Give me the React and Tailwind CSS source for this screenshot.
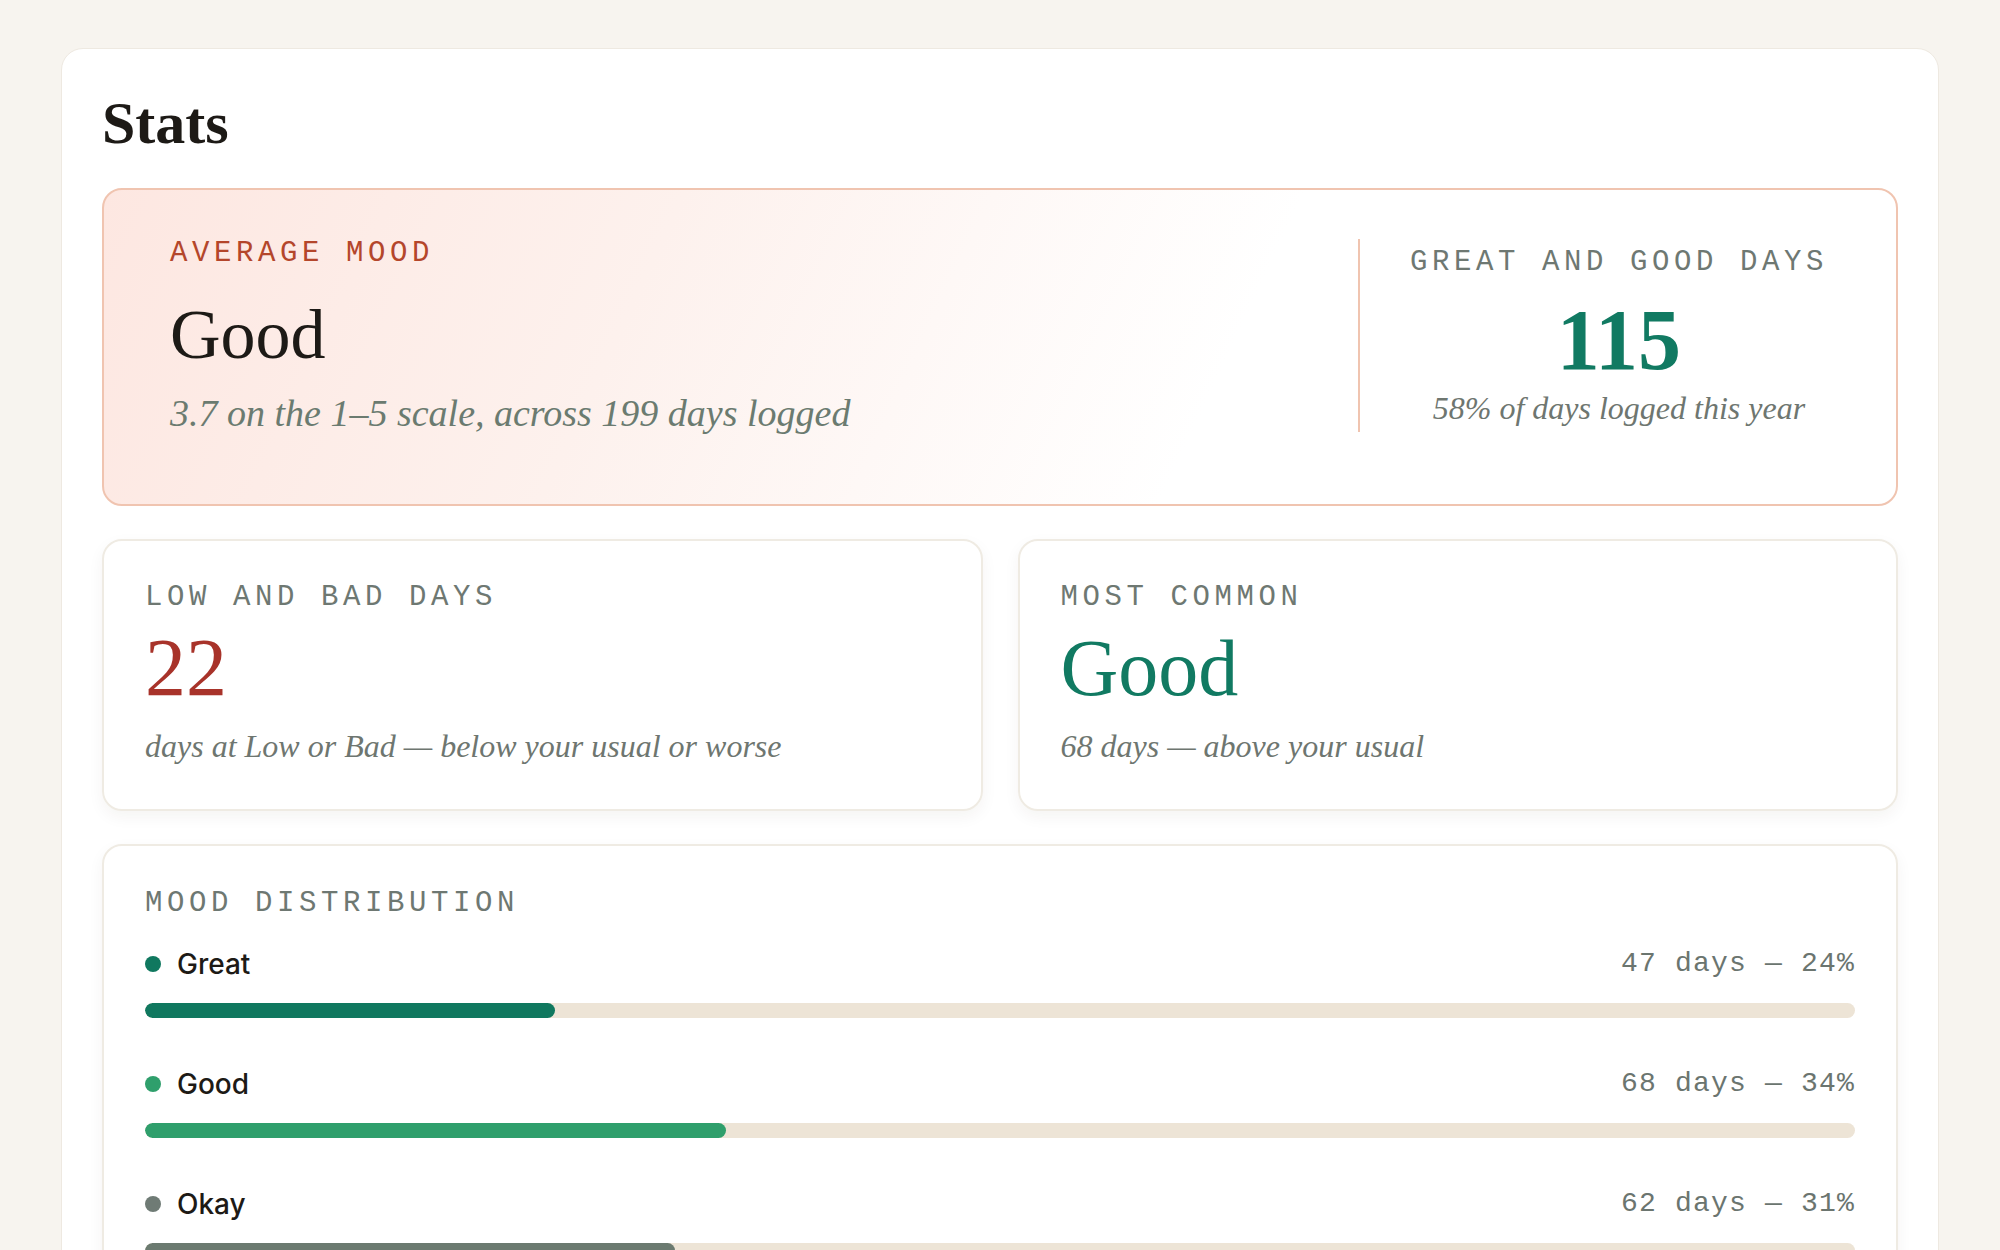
import React from 'react';

const serif = "font-['Liberation_Serif','DejaVu_Serif',serif]";
const mono = "font-['Liberation_Mono','DejaVu_Sans_Mono',monospace]";
const sans = "font-['Inter','Lato',sans-serif]";

const moods = [
  { name: 'Great', days: 47, pct: 24, dot: 'bg-[#10785f]', fill: 'bg-[#10785f]' },
  { name: 'Good', days: 68, pct: 34, dot: 'bg-[#2f9f6c]', fill: 'bg-[#2f9f6c]' },
  { name: 'Okay', days: 62, pct: 31, dot: 'bg-[#6f7b75]', fill: 'bg-[#6b7a70]' },
  { name: 'Low', days: 17, pct: 9, dot: 'bg-[#c98a4b]', fill: 'bg-[#c98a4b]' },
  { name: 'Bad', days: 5, pct: 3, dot: 'bg-[#a8332a]', fill: 'bg-[#a8332a]' },
];

const Label = ({ children, className = 'text-[#6e7872]' }) => (
  <div className={`${mono} text-[29px] leading-none tracking-[4.6px] uppercase ${className}`}>{children}</div>
);

const Note = ({ children, className = '' }) => (
  <div className={`${serif} italic leading-none ${className}`}>{children}</div>
);

const App = () => {
  return (
    <div className="min-h-screen bg-[#f7f4ef] px-[61px] pt-[48px]">
      <div className="bg-white border border-[#eee9e1] rounded-[22px] px-[40px] pt-[44px] pb-[40px] flex flex-col gap-[33px]">
        {/* Header */}
        <h1 className={`${serif} font-bold text-[60px] leading-none text-[#1d1a16] mb-[2px]`}>Stats</h1>

        {/* Average mood */}
        <div className="flex rounded-[20px] border-2 border-[#f0c4b0] bg-[linear-gradient(115deg,#fde7e1_0%,#fdf1ed_30%,#ffffff_62%)] pl-[66px] pr-[68px] pt-[49px] pb-[72px]">
          <div className="flex-1 flex flex-col">
            <Label className="text-[#b4462b]">Average mood</Label>
            <div className={`${serif} mt-[32px] text-[70px] leading-none text-[#1d1a16]`}>Good</div>
            <Note className="mt-[24px] text-[38px] text-[#6b7b70]">3.7 on the 1–5 scale, across 199 days logged</Note>
          </div>
          <div className="border-l-2 border-[#f0c4b0] pl-[50px] flex flex-col items-center justify-center">
            <Label>Great and good days</Label>
            <div className={`${serif} font-bold mt-[20px] text-[86px] leading-none text-[#117a62]`}>115</div>
            <Note className="mt-[9px] text-[32px] text-[#6e7670]">58% of days logged this year</Note>
          </div>
        </div>

        {/* Low/bad + most common */}
        <div className="grid grid-cols-2 gap-[35px]">
          <div className="rounded-[20px] border-2 border-[#efebe3] shadow-[0_6px_16px_rgba(60,40,20,0.05)] px-[41px] pt-[42px] pb-[47px]">
            <Label>Low and bad days</Label>
            <div className={`${serif} mt-[15px] text-[82px] leading-none text-[#a8332a]`}>22</div>
            <Note className="mt-[21px] text-[32px] text-[#6e7670]">days at Low or Bad — below your usual or worse</Note>
          </div>
          <div className="rounded-[20px] border-2 border-[#efebe3] shadow-[0_6px_16px_rgba(60,40,20,0.05)] px-[41px] pt-[42px] pb-[47px]">
            <Label>Most common</Label>
            <div className={`${serif} mt-[15px] text-[82px] leading-none text-[#117a62]`}>
              <span className="text-[80px]">Good</span>
            </div>
            <Note className="mt-[21px] text-[32px] text-[#6e7670]">68 days — above your usual</Note>
          </div>
        </div>

        {/* Distribution */}
        <div className="rounded-[20px] border-2 border-[#efebe3] shadow-[0_6px_16px_rgba(60,40,20,0.05)] px-[41px] pt-[43px] pb-[44px]">
          <Label>Mood distribution</Label>
          <div className="mt-[32px] flex flex-col gap-[52px]">
            {moods.map((m) => (
              <div key={m.name}>
                <div className="flex items-center justify-between">
                  <div className="flex items-center gap-[16px]">
                    <span className={`w-[16px] h-[16px] rounded-full ${m.dot}`} />
                    <span className={`${sans} font-medium text-[28px] leading-none text-[#1d1a16]`}>{m.name}</span>
                  </div>
                  <span className={`${mono} text-[28px] leading-none tracking-[1.2px] text-[#6b756f]`}>
                    {m.days} days — {m.pct}%
                  </span>
                </div>
                <div className="mt-[25px] h-[15px] rounded-full bg-[#ede4d6] overflow-hidden">
                  <div className={`h-full rounded-full ${m.fill}`} style={{ width: `${m.pct}%` }} />
                </div>
              </div>
            ))}
          </div>
        </div>
      </div>
    </div>
  );
};

export default App;
